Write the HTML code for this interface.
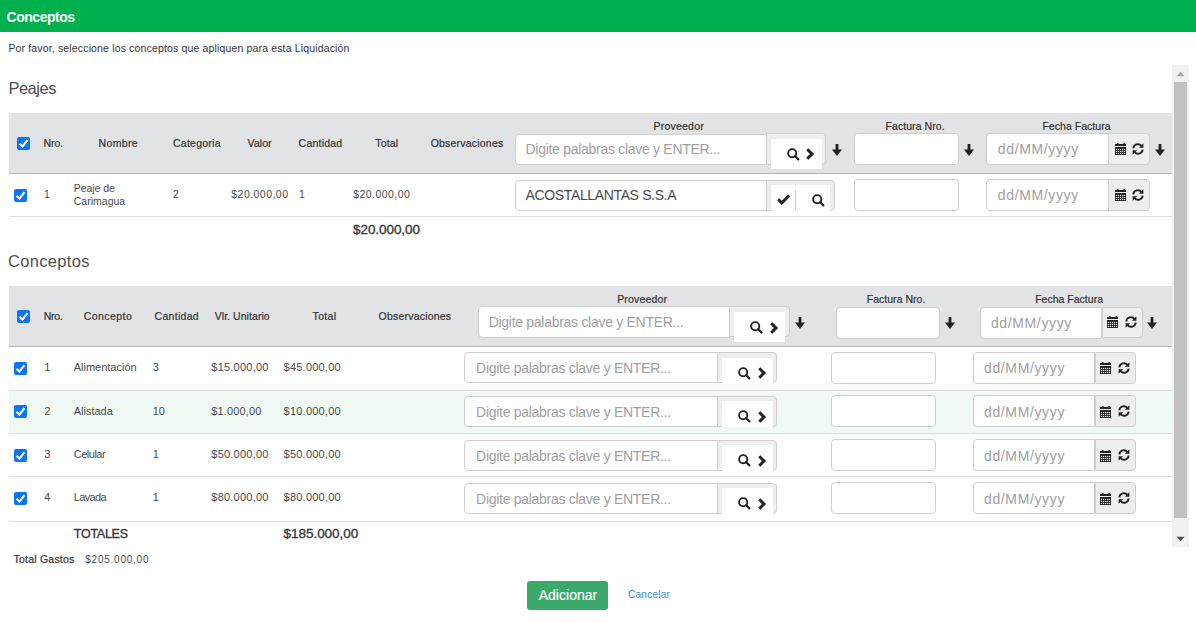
<!DOCTYPE html>
<html><head><meta charset="utf-8"><style>
html,body{margin:0;padding:0;width:1196px;height:623px;overflow:hidden;background:#fff;position:relative;font-family:"Liberation Sans", sans-serif;}
span{line-height:1;white-space:nowrap;}
</style></head><body>
<div style="position:absolute;left:0px;top:0px;width:1196px;height:32px;background:#00b04f"></div>
<div style="position:absolute;left:1172px;top:65px;width:17px;height:482px;background:#f1f1f1"></div>
<div style="position:absolute;left:1174px;top:82px;width:13px;height:436px;background:#c1c1c1"></div>
<svg style="position:absolute;left:1176px;top:71px" width="9" height="6" viewBox="0 0 9 6"><path d="M0.5 5.2 L4.5 0.8 L8.5 5.2 Z" fill="#a3a3a3"/></svg>
<svg style="position:absolute;left:1176px;top:536px" width="9" height="6" viewBox="0 0 9 6"><path d="M0.5 0.8 L4.5 5.2 L8.5 0.8 Z" fill="#505050"/></svg>
<div style="position:absolute;left:9px;top:113px;width:1163px;height:60px;background:#e2e3e5"></div>
<div style="position:absolute;left:9px;top:173px;width:1163px;height:1px;background:#b4b4b4"></div>
<div style="position:absolute;left:9px;top:216px;width:1163px;height:1px;background:#dedede"></div>
<div style="position:absolute;left:17px;top:137px;width:13px;height:13px;border-radius:2px;background:#0b74fc"><svg width="13" height="13" viewBox="0 0 13 13" style="position:absolute;left:0;top:0"><path d="M2.5 6.8 L5.4 9.6 L10.5 3.1" fill="none" stroke="#fff" stroke-width="2.1"/></svg></div>
<div style="position:absolute;left:514.5px;top:133.5px;width:252.5px;height:31.5px;box-sizing:border-box;background:#fff;border:1px solid #cfcfcf;border-radius:4px 0 0 4px;"></div>
<div style="position:absolute;left:766px;top:133.3px;width:60.200000000000045px;height:31.299999999999983px;box-sizing:border-box;background:#eeeeee;border:1px solid #cfcfcf;border-radius:0 4px 4px 0"></div>
<div style="position:absolute;left:771px;top:139px;width:51px;height:30px;background:#fff"></div>
<svg style="position:absolute;left:787px;top:148px" width="13" height="13" viewBox="0 0 13 13"><circle cx="5.2" cy="5.2" r="4.1" fill="none" stroke="#222" stroke-width="1.9"/><line x1="8.2" y1="8.2" x2="11.4" y2="11.4" stroke="#222" stroke-width="2.2" stroke-linecap="round"/></svg>
<svg style="position:absolute;left:806px;top:148px" width="9" height="12" viewBox="0 0 9 12"><path d="M0.2 2.3 L2.3 0.2 L8.1 6 L2.3 11.8 L0.2 9.7 L3.9 6 Z" fill="#222"/></svg>
<svg style="position:absolute;left:832px;top:144px" width="10" height="12" viewBox="0 0 10 12"><rect x="3.6" y="0" width="2.8" height="7" fill="#222"/><path d="M0 5.5 L10 5.5 L5 12 Z" fill="#222"/></svg>
<div style="position:absolute;left:854.2px;top:133.3px;width:105.19999999999993px;height:32.099999999999994px;box-sizing:border-box;background:#fff;border:1px solid #cfcfcf;border-radius:4px;"></div>
<svg style="position:absolute;left:964px;top:144px" width="10" height="12" viewBox="0 0 10 12"><rect x="3.6" y="0" width="2.8" height="7" fill="#222"/><path d="M0 5.5 L10 5.5 L5 12 Z" fill="#222"/></svg>
<div style="position:absolute;left:986.4px;top:133.3px;width:122.60000000000002px;height:32.099999999999994px;box-sizing:border-box;background:#fff;border:1px solid #cfcfcf;border-radius:4px 0 0 4px;"></div>
<div style="position:absolute;left:1108.2px;top:133.3px;width:41.399999999999864px;height:31.299999999999983px;box-sizing:border-box;background:#eeeeee;border:1px solid #cfcfcf;border-radius:0 4px 4px 0"></div>
<svg style="position:absolute;left:1115px;top:142px" width="12" height="14" viewBox="0 0 12 14"><rect x="2" y="1" width="1.6" height="1.5" fill="#222"/><rect x="8.4" y="1" width="1.6" height="1.5" fill="#222"/><rect x="0" y="2" width="11" height="2" fill="#222"/><rect x="0" y="5" width="11" height="8" fill="#222"/><rect x="0.9" y="6.9" width="1.2" height="1.2" fill="#e8e8e8"/><rect x="2.9" y="6.9" width="1.2" height="1.2" fill="#e8e8e8"/><rect x="4.9" y="6.9" width="1.2" height="1.2" fill="#e8e8e8"/><rect x="6.9" y="6.9" width="1.2" height="1.2" fill="#e8e8e8"/><rect x="8.9" y="6.9" width="1.2" height="1.2" fill="#e8e8e8"/><rect x="0.9" y="8.9" width="1.2" height="1.2" fill="#e8e8e8"/><rect x="2.9" y="8.9" width="1.2" height="1.2" fill="#e8e8e8"/><rect x="4.9" y="8.9" width="1.2" height="1.2" fill="#e8e8e8"/><rect x="6.9" y="8.9" width="1.2" height="1.2" fill="#e8e8e8"/><rect x="8.9" y="8.9" width="1.2" height="1.2" fill="#e8e8e8"/><rect x="0.9" y="10.9" width="1.2" height="1.2" fill="#e8e8e8"/><rect x="2.9" y="10.9" width="1.2" height="1.2" fill="#e8e8e8"/><rect x="4.9" y="10.9" width="1.2" height="1.2" fill="#e8e8e8"/><rect x="6.9" y="10.9" width="1.2" height="1.2" fill="#e8e8e8"/><rect x="8.9" y="10.9" width="1.2" height="1.2" fill="#e8e8e8"/></svg>
<svg style="position:absolute;left:1132px;top:143px" width="12" height="12" viewBox="0 0 12 12"><path d="M1.3 5.3 A4.6 4.6 0 0 1 9.4 2.9" fill="none" stroke="#222" stroke-width="1.9"/><path d="M11.4 0.2 L11.4 4.7 L6.9 4.7 Z" fill="#222"/><path d="M10.7 6.7 A4.6 4.6 0 0 1 2.6 9.1" fill="none" stroke="#222" stroke-width="1.9"/><path d="M0.6 11.8 L0.6 7.3 L5.1 7.3 Z" fill="#222"/></svg>
<svg style="position:absolute;left:1155px;top:144px" width="10" height="12" viewBox="0 0 10 12"><rect x="3.6" y="0" width="2.8" height="7" fill="#222"/><path d="M0 5.5 L10 5.5 L5 12 Z" fill="#222"/></svg>
<div style="position:absolute;left:14px;top:189px;width:13px;height:13px;border-radius:2px;background:#0b74fc"><svg width="13" height="13" viewBox="0 0 13 13" style="position:absolute;left:0;top:0"><path d="M2.5 6.8 L5.4 9.6 L10.5 3.1" fill="none" stroke="#fff" stroke-width="2.1"/></svg></div>
<div style="position:absolute;left:514.5px;top:179.5px;width:252.5px;height:31.0px;box-sizing:border-box;background:#fff;border:1px solid #cfcfcf;border-radius:4px 0 0 4px;"></div>
<div style="position:absolute;left:766px;top:179.5px;width:68.5px;height:31.0px;box-sizing:border-box;background:#eeeeee;border:1px solid #cfcfcf;border-radius:0 4px 4px 0"></div>
<div style="position:absolute;left:771px;top:185px;width:59px;height:26px;background:#fff"></div>
<svg style="position:absolute;left:777px;top:194px" width="14" height="12" viewBox="0 0 14 12"><path d="M0.2 6.3 L2.3 4.2 L4.8 6.7 L11.1 0.4 L13.2 2.5 L4.8 10.9 Z" fill="#222"/></svg>
<div style="position:absolute;left:795px;top:190px;width:1px;height:20px;background:#cfcfcf"></div>
<svg style="position:absolute;left:812px;top:194px" width="13" height="13" viewBox="0 0 13 13"><circle cx="5.2" cy="5.2" r="4.1" fill="none" stroke="#222" stroke-width="1.9"/><line x1="8.2" y1="8.2" x2="11.4" y2="11.4" stroke="#222" stroke-width="2.2" stroke-linecap="round"/></svg>
<div style="position:absolute;left:854.2px;top:179px;width:105.19999999999993px;height:31.5px;box-sizing:border-box;background:#fff;border:1px solid #cfcfcf;border-radius:4px;"></div>
<div style="position:absolute;left:986.4px;top:179px;width:122.60000000000002px;height:31.5px;box-sizing:border-box;background:#fff;border:1px solid #cfcfcf;border-radius:4px 0 0 4px;"></div>
<div style="position:absolute;left:1108.2px;top:179px;width:41.399999999999864px;height:31.5px;box-sizing:border-box;background:#eeeeee;border:1px solid #cfcfcf;border-radius:0 4px 4px 0"></div>
<svg style="position:absolute;left:1115px;top:188px" width="12" height="14" viewBox="0 0 12 14"><rect x="2" y="1" width="1.6" height="1.5" fill="#222"/><rect x="8.4" y="1" width="1.6" height="1.5" fill="#222"/><rect x="0" y="2" width="11" height="2" fill="#222"/><rect x="0" y="5" width="11" height="8" fill="#222"/><rect x="0.9" y="6.9" width="1.2" height="1.2" fill="#e8e8e8"/><rect x="2.9" y="6.9" width="1.2" height="1.2" fill="#e8e8e8"/><rect x="4.9" y="6.9" width="1.2" height="1.2" fill="#e8e8e8"/><rect x="6.9" y="6.9" width="1.2" height="1.2" fill="#e8e8e8"/><rect x="8.9" y="6.9" width="1.2" height="1.2" fill="#e8e8e8"/><rect x="0.9" y="8.9" width="1.2" height="1.2" fill="#e8e8e8"/><rect x="2.9" y="8.9" width="1.2" height="1.2" fill="#e8e8e8"/><rect x="4.9" y="8.9" width="1.2" height="1.2" fill="#e8e8e8"/><rect x="6.9" y="8.9" width="1.2" height="1.2" fill="#e8e8e8"/><rect x="8.9" y="8.9" width="1.2" height="1.2" fill="#e8e8e8"/><rect x="0.9" y="10.9" width="1.2" height="1.2" fill="#e8e8e8"/><rect x="2.9" y="10.9" width="1.2" height="1.2" fill="#e8e8e8"/><rect x="4.9" y="10.9" width="1.2" height="1.2" fill="#e8e8e8"/><rect x="6.9" y="10.9" width="1.2" height="1.2" fill="#e8e8e8"/><rect x="8.9" y="10.9" width="1.2" height="1.2" fill="#e8e8e8"/></svg>
<svg style="position:absolute;left:1132px;top:189px" width="12" height="12" viewBox="0 0 12 12"><path d="M1.3 5.3 A4.6 4.6 0 0 1 9.4 2.9" fill="none" stroke="#222" stroke-width="1.9"/><path d="M11.4 0.2 L11.4 4.7 L6.9 4.7 Z" fill="#222"/><path d="M10.7 6.7 A4.6 4.6 0 0 1 2.6 9.1" fill="none" stroke="#222" stroke-width="1.9"/><path d="M0.6 11.8 L0.6 7.3 L5.1 7.3 Z" fill="#222"/></svg>
<div style="position:absolute;left:9px;top:286px;width:1163px;height:60px;background:#e2e3e5"></div>
<div style="position:absolute;left:9px;top:346px;width:1163px;height:1px;background:#b4b4b4"></div>
<div style="position:absolute;left:17px;top:310px;width:13px;height:13px;border-radius:2px;background:#0b74fc"><svg width="13" height="13" viewBox="0 0 13 13" style="position:absolute;left:0;top:0"><path d="M2.5 6.8 L5.4 9.6 L10.5 3.1" fill="none" stroke="#fff" stroke-width="2.1"/></svg></div>
<div style="position:absolute;left:477.7px;top:306.3px;width:252.3px;height:31.899999999999977px;box-sizing:border-box;background:#fff;border:1px solid #cfcfcf;border-radius:4px 0 0 4px;"></div>
<div style="position:absolute;left:729.3px;top:306.3px;width:61.0px;height:31.19999999999999px;box-sizing:border-box;background:#eeeeee;border:1px solid #cfcfcf;border-radius:0 4px 4px 0"></div>
<div style="position:absolute;left:734px;top:312px;width:51px;height:29.5px;background:#fff"></div>
<svg style="position:absolute;left:750px;top:321px" width="13" height="13" viewBox="0 0 13 13"><circle cx="5.2" cy="5.2" r="4.1" fill="none" stroke="#222" stroke-width="1.9"/><line x1="8.2" y1="8.2" x2="11.4" y2="11.4" stroke="#222" stroke-width="2.2" stroke-linecap="round"/></svg>
<svg style="position:absolute;left:770px;top:322px" width="9" height="12" viewBox="0 0 9 12"><path d="M0.2 2.3 L2.3 0.2 L8.1 6 L2.3 11.8 L0.2 9.7 L3.9 6 Z" fill="#222"/></svg>
<svg style="position:absolute;left:795px;top:317px" width="10" height="12" viewBox="0 0 10 12"><rect x="3.6" y="0" width="2.8" height="7" fill="#222"/><path d="M0 5.5 L10 5.5 L5 12 Z" fill="#222"/></svg>
<div style="position:absolute;left:835.7px;top:306.5px;width:104.69999999999993px;height:32.19999999999999px;box-sizing:border-box;background:#fff;border:1px solid #cfcfcf;border-radius:4px;"></div>
<svg style="position:absolute;left:945px;top:317px" width="10" height="12" viewBox="0 0 10 12"><rect x="3.6" y="0" width="2.8" height="7" fill="#222"/><path d="M0 5.5 L10 5.5 L5 12 Z" fill="#222"/></svg>
<div style="position:absolute;left:979.5px;top:306.5px;width:122.5px;height:32.19999999999999px;box-sizing:border-box;background:#fff;border:1px solid #cfcfcf;border-radius:4px 0 0 4px;"></div>
<div style="position:absolute;left:1101.5px;top:306.5px;width:41.200000000000045px;height:31.5px;box-sizing:border-box;background:#eeeeee;border:1px solid #cfcfcf;border-radius:0 4px 4px 0"></div>
<svg style="position:absolute;left:1107px;top:315px" width="12" height="14" viewBox="0 0 12 14"><rect x="2" y="1" width="1.6" height="1.5" fill="#222"/><rect x="8.4" y="1" width="1.6" height="1.5" fill="#222"/><rect x="0" y="2" width="11" height="2" fill="#222"/><rect x="0" y="5" width="11" height="8" fill="#222"/><rect x="0.9" y="6.9" width="1.2" height="1.2" fill="#e8e8e8"/><rect x="2.9" y="6.9" width="1.2" height="1.2" fill="#e8e8e8"/><rect x="4.9" y="6.9" width="1.2" height="1.2" fill="#e8e8e8"/><rect x="6.9" y="6.9" width="1.2" height="1.2" fill="#e8e8e8"/><rect x="8.9" y="6.9" width="1.2" height="1.2" fill="#e8e8e8"/><rect x="0.9" y="8.9" width="1.2" height="1.2" fill="#e8e8e8"/><rect x="2.9" y="8.9" width="1.2" height="1.2" fill="#e8e8e8"/><rect x="4.9" y="8.9" width="1.2" height="1.2" fill="#e8e8e8"/><rect x="6.9" y="8.9" width="1.2" height="1.2" fill="#e8e8e8"/><rect x="8.9" y="8.9" width="1.2" height="1.2" fill="#e8e8e8"/><rect x="0.9" y="10.9" width="1.2" height="1.2" fill="#e8e8e8"/><rect x="2.9" y="10.9" width="1.2" height="1.2" fill="#e8e8e8"/><rect x="4.9" y="10.9" width="1.2" height="1.2" fill="#e8e8e8"/><rect x="6.9" y="10.9" width="1.2" height="1.2" fill="#e8e8e8"/><rect x="8.9" y="10.9" width="1.2" height="1.2" fill="#e8e8e8"/></svg>
<svg style="position:absolute;left:1125px;top:316px" width="12" height="12" viewBox="0 0 12 12"><path d="M1.3 5.3 A4.6 4.6 0 0 1 9.4 2.9" fill="none" stroke="#222" stroke-width="1.9"/><path d="M11.4 0.2 L11.4 4.7 L6.9 4.7 Z" fill="#222"/><path d="M10.7 6.7 A4.6 4.6 0 0 1 2.6 9.1" fill="none" stroke="#222" stroke-width="1.9"/><path d="M0.6 11.8 L0.6 7.3 L5.1 7.3 Z" fill="#222"/></svg>
<svg style="position:absolute;left:1147px;top:317px" width="10" height="12" viewBox="0 0 10 12"><rect x="3.6" y="0" width="2.8" height="7" fill="#222"/><path d="M0 5.5 L10 5.5 L5 12 Z" fill="#222"/></svg>
<div style="position:absolute;left:9px;top:389.5px;width:1163px;height:1.0px;background:#dedede"></div>
<div style="position:absolute;left:14px;top:362px;width:13px;height:13px;border-radius:2px;background:#0b74fc"><svg width="13" height="13" viewBox="0 0 13 13" style="position:absolute;left:0;top:0"><path d="M2.5 6.8 L5.4 9.6 L10.5 3.1" fill="none" stroke="#fff" stroke-width="2.1"/></svg></div>
<div style="position:absolute;left:464.2px;top:352.29999999999995px;width:253.8px;height:31.200000000000045px;box-sizing:border-box;background:#fff;border:1px solid #cfcfcf;border-radius:4px 0 0 4px;"></div>
<div style="position:absolute;left:716.8px;top:352.29999999999995px;width:60.700000000000045px;height:31.200000000000045px;box-sizing:border-box;background:#eeeeee;border:1px solid #cfcfcf;border-radius:0 4px 4px 0"></div>
<div style="position:absolute;left:721.8px;top:357.59999999999997px;width:51.40000000000009px;height:25.900000000000034px;background:#fff"></div>
<svg style="position:absolute;left:738px;top:366.79999999999995px" width="13" height="13" viewBox="0 0 13 13"><circle cx="5.2" cy="5.2" r="4.1" fill="none" stroke="#222" stroke-width="1.9"/><line x1="8.2" y1="8.2" x2="11.4" y2="11.4" stroke="#222" stroke-width="2.2" stroke-linecap="round"/></svg>
<svg style="position:absolute;left:758px;top:367px" width="9" height="12" viewBox="0 0 9 12"><path d="M0.2 2.3 L2.3 0.2 L8.1 6 L2.3 11.8 L0.2 9.7 L3.9 6 Z" fill="#222"/></svg>
<div style="position:absolute;left:830.5px;top:351.99999999999994px;width:105.39999999999998px;height:31.800000000000068px;box-sizing:border-box;background:#fff;border:1px solid #cfcfcf;border-radius:4px;"></div>
<div style="position:absolute;left:972.6px;top:351.99999999999994px;width:122.39999999999998px;height:31.800000000000068px;box-sizing:border-box;background:#fff;border:1px solid #cfcfcf;border-radius:4px 0 0 4px;"></div>
<div style="position:absolute;left:1094.5px;top:351.99999999999994px;width:41.0px;height:31.500000000000057px;box-sizing:border-box;background:#eeeeee;border:1px solid #cfcfcf;border-radius:0 4px 4px 0"></div>
<svg style="position:absolute;left:1100px;top:361px" width="12" height="14" viewBox="0 0 12 14"><rect x="2" y="1" width="1.6" height="1.5" fill="#222"/><rect x="8.4" y="1" width="1.6" height="1.5" fill="#222"/><rect x="0" y="2" width="11" height="2" fill="#222"/><rect x="0" y="5" width="11" height="8" fill="#222"/><rect x="0.9" y="6.9" width="1.2" height="1.2" fill="#e8e8e8"/><rect x="2.9" y="6.9" width="1.2" height="1.2" fill="#e8e8e8"/><rect x="4.9" y="6.9" width="1.2" height="1.2" fill="#e8e8e8"/><rect x="6.9" y="6.9" width="1.2" height="1.2" fill="#e8e8e8"/><rect x="8.9" y="6.9" width="1.2" height="1.2" fill="#e8e8e8"/><rect x="0.9" y="8.9" width="1.2" height="1.2" fill="#e8e8e8"/><rect x="2.9" y="8.9" width="1.2" height="1.2" fill="#e8e8e8"/><rect x="4.9" y="8.9" width="1.2" height="1.2" fill="#e8e8e8"/><rect x="6.9" y="8.9" width="1.2" height="1.2" fill="#e8e8e8"/><rect x="8.9" y="8.9" width="1.2" height="1.2" fill="#e8e8e8"/><rect x="0.9" y="10.9" width="1.2" height="1.2" fill="#e8e8e8"/><rect x="2.9" y="10.9" width="1.2" height="1.2" fill="#e8e8e8"/><rect x="4.9" y="10.9" width="1.2" height="1.2" fill="#e8e8e8"/><rect x="6.9" y="10.9" width="1.2" height="1.2" fill="#e8e8e8"/><rect x="8.9" y="10.9" width="1.2" height="1.2" fill="#e8e8e8"/></svg>
<svg style="position:absolute;left:1118px;top:362px" width="12" height="12" viewBox="0 0 12 12"><path d="M1.3 5.3 A4.6 4.6 0 0 1 9.4 2.9" fill="none" stroke="#222" stroke-width="1.9"/><path d="M11.4 0.2 L11.4 4.7 L6.9 4.7 Z" fill="#222"/><path d="M10.7 6.7 A4.6 4.6 0 0 1 2.6 9.1" fill="none" stroke="#222" stroke-width="1.9"/><path d="M0.6 11.8 L0.6 7.3 L5.1 7.3 Z" fill="#222"/></svg>
<div style="position:absolute;left:9px;top:390.5px;width:1163px;height:42.69999999999999px;background:#f1f9f4"></div>
<div style="position:absolute;left:9px;top:433.2px;width:1163px;height:1.0px;background:#dedede"></div>
<div style="position:absolute;left:14px;top:405px;width:13px;height:13px;border-radius:2px;background:#0b74fc"><svg width="13" height="13" viewBox="0 0 13 13" style="position:absolute;left:0;top:0"><path d="M2.5 6.8 L5.4 9.6 L10.5 3.1" fill="none" stroke="#fff" stroke-width="2.1"/></svg></div>
<div style="position:absolute;left:464.2px;top:395.7px;width:253.8px;height:31.200000000000045px;box-sizing:border-box;background:#fff;border:1px solid #cfcfcf;border-radius:4px 0 0 4px;"></div>
<div style="position:absolute;left:716.8px;top:395.7px;width:60.700000000000045px;height:31.200000000000045px;box-sizing:border-box;background:#eeeeee;border:1px solid #cfcfcf;border-radius:0 4px 4px 0"></div>
<div style="position:absolute;left:721.8px;top:401.0px;width:51.40000000000009px;height:25.900000000000034px;background:#fff"></div>
<svg style="position:absolute;left:738px;top:410.2px" width="13" height="13" viewBox="0 0 13 13"><circle cx="5.2" cy="5.2" r="4.1" fill="none" stroke="#222" stroke-width="1.9"/><line x1="8.2" y1="8.2" x2="11.4" y2="11.4" stroke="#222" stroke-width="2.2" stroke-linecap="round"/></svg>
<svg style="position:absolute;left:758px;top:411px" width="9" height="12" viewBox="0 0 9 12"><path d="M0.2 2.3 L2.3 0.2 L8.1 6 L2.3 11.8 L0.2 9.7 L3.9 6 Z" fill="#222"/></svg>
<div style="position:absolute;left:830.5px;top:395.4px;width:105.39999999999998px;height:31.800000000000068px;box-sizing:border-box;background:#fff;border:1px solid #cfcfcf;border-radius:4px;"></div>
<div style="position:absolute;left:972.6px;top:395.4px;width:122.39999999999998px;height:31.800000000000068px;box-sizing:border-box;background:#fff;border:1px solid #cfcfcf;border-radius:4px 0 0 4px;"></div>
<div style="position:absolute;left:1094.5px;top:395.4px;width:41.0px;height:31.500000000000057px;box-sizing:border-box;background:#eeeeee;border:1px solid #cfcfcf;border-radius:0 4px 4px 0"></div>
<svg style="position:absolute;left:1100px;top:405px" width="12" height="14" viewBox="0 0 12 14"><rect x="2" y="1" width="1.6" height="1.5" fill="#222"/><rect x="8.4" y="1" width="1.6" height="1.5" fill="#222"/><rect x="0" y="2" width="11" height="2" fill="#222"/><rect x="0" y="5" width="11" height="8" fill="#222"/><rect x="0.9" y="6.9" width="1.2" height="1.2" fill="#e8e8e8"/><rect x="2.9" y="6.9" width="1.2" height="1.2" fill="#e8e8e8"/><rect x="4.9" y="6.9" width="1.2" height="1.2" fill="#e8e8e8"/><rect x="6.9" y="6.9" width="1.2" height="1.2" fill="#e8e8e8"/><rect x="8.9" y="6.9" width="1.2" height="1.2" fill="#e8e8e8"/><rect x="0.9" y="8.9" width="1.2" height="1.2" fill="#e8e8e8"/><rect x="2.9" y="8.9" width="1.2" height="1.2" fill="#e8e8e8"/><rect x="4.9" y="8.9" width="1.2" height="1.2" fill="#e8e8e8"/><rect x="6.9" y="8.9" width="1.2" height="1.2" fill="#e8e8e8"/><rect x="8.9" y="8.9" width="1.2" height="1.2" fill="#e8e8e8"/><rect x="0.9" y="10.9" width="1.2" height="1.2" fill="#e8e8e8"/><rect x="2.9" y="10.9" width="1.2" height="1.2" fill="#e8e8e8"/><rect x="4.9" y="10.9" width="1.2" height="1.2" fill="#e8e8e8"/><rect x="6.9" y="10.9" width="1.2" height="1.2" fill="#e8e8e8"/><rect x="8.9" y="10.9" width="1.2" height="1.2" fill="#e8e8e8"/></svg>
<svg style="position:absolute;left:1118px;top:405px" width="12" height="12" viewBox="0 0 12 12"><path d="M1.3 5.3 A4.6 4.6 0 0 1 9.4 2.9" fill="none" stroke="#222" stroke-width="1.9"/><path d="M11.4 0.2 L11.4 4.7 L6.9 4.7 Z" fill="#222"/><path d="M10.7 6.7 A4.6 4.6 0 0 1 2.6 9.1" fill="none" stroke="#222" stroke-width="1.9"/><path d="M0.6 11.8 L0.6 7.3 L5.1 7.3 Z" fill="#222"/></svg>
<div style="position:absolute;left:9px;top:476.2px;width:1163px;height:1.0px;background:#dedede"></div>
<div style="position:absolute;left:14px;top:449px;width:13px;height:13px;border-radius:2px;background:#0b74fc"><svg width="13" height="13" viewBox="0 0 13 13" style="position:absolute;left:0;top:0"><path d="M2.5 6.8 L5.4 9.6 L10.5 3.1" fill="none" stroke="#fff" stroke-width="2.1"/></svg></div>
<div style="position:absolute;left:464.2px;top:439.7px;width:253.8px;height:31.200000000000045px;box-sizing:border-box;background:#fff;border:1px solid #cfcfcf;border-radius:4px 0 0 4px;"></div>
<div style="position:absolute;left:716.8px;top:439.7px;width:60.700000000000045px;height:31.200000000000045px;box-sizing:border-box;background:#eeeeee;border:1px solid #cfcfcf;border-radius:0 4px 4px 0"></div>
<div style="position:absolute;left:721.8px;top:445.0px;width:51.40000000000009px;height:25.900000000000034px;background:#fff"></div>
<svg style="position:absolute;left:738px;top:454.2px" width="13" height="13" viewBox="0 0 13 13"><circle cx="5.2" cy="5.2" r="4.1" fill="none" stroke="#222" stroke-width="1.9"/><line x1="8.2" y1="8.2" x2="11.4" y2="11.4" stroke="#222" stroke-width="2.2" stroke-linecap="round"/></svg>
<svg style="position:absolute;left:758px;top:455px" width="9" height="12" viewBox="0 0 9 12"><path d="M0.2 2.3 L2.3 0.2 L8.1 6 L2.3 11.8 L0.2 9.7 L3.9 6 Z" fill="#222"/></svg>
<div style="position:absolute;left:830.5px;top:439.4px;width:105.39999999999998px;height:31.800000000000068px;box-sizing:border-box;background:#fff;border:1px solid #cfcfcf;border-radius:4px;"></div>
<div style="position:absolute;left:972.6px;top:439.4px;width:122.39999999999998px;height:31.800000000000068px;box-sizing:border-box;background:#fff;border:1px solid #cfcfcf;border-radius:4px 0 0 4px;"></div>
<div style="position:absolute;left:1094.5px;top:439.4px;width:41.0px;height:31.500000000000057px;box-sizing:border-box;background:#eeeeee;border:1px solid #cfcfcf;border-radius:0 4px 4px 0"></div>
<svg style="position:absolute;left:1100px;top:449px" width="12" height="14" viewBox="0 0 12 14"><rect x="2" y="1" width="1.6" height="1.5" fill="#222"/><rect x="8.4" y="1" width="1.6" height="1.5" fill="#222"/><rect x="0" y="2" width="11" height="2" fill="#222"/><rect x="0" y="5" width="11" height="8" fill="#222"/><rect x="0.9" y="6.9" width="1.2" height="1.2" fill="#e8e8e8"/><rect x="2.9" y="6.9" width="1.2" height="1.2" fill="#e8e8e8"/><rect x="4.9" y="6.9" width="1.2" height="1.2" fill="#e8e8e8"/><rect x="6.9" y="6.9" width="1.2" height="1.2" fill="#e8e8e8"/><rect x="8.9" y="6.9" width="1.2" height="1.2" fill="#e8e8e8"/><rect x="0.9" y="8.9" width="1.2" height="1.2" fill="#e8e8e8"/><rect x="2.9" y="8.9" width="1.2" height="1.2" fill="#e8e8e8"/><rect x="4.9" y="8.9" width="1.2" height="1.2" fill="#e8e8e8"/><rect x="6.9" y="8.9" width="1.2" height="1.2" fill="#e8e8e8"/><rect x="8.9" y="8.9" width="1.2" height="1.2" fill="#e8e8e8"/><rect x="0.9" y="10.9" width="1.2" height="1.2" fill="#e8e8e8"/><rect x="2.9" y="10.9" width="1.2" height="1.2" fill="#e8e8e8"/><rect x="4.9" y="10.9" width="1.2" height="1.2" fill="#e8e8e8"/><rect x="6.9" y="10.9" width="1.2" height="1.2" fill="#e8e8e8"/><rect x="8.9" y="10.9" width="1.2" height="1.2" fill="#e8e8e8"/></svg>
<svg style="position:absolute;left:1118px;top:449px" width="12" height="12" viewBox="0 0 12 12"><path d="M1.3 5.3 A4.6 4.6 0 0 1 9.4 2.9" fill="none" stroke="#222" stroke-width="1.9"/><path d="M11.4 0.2 L11.4 4.7 L6.9 4.7 Z" fill="#222"/><path d="M10.7 6.7 A4.6 4.6 0 0 1 2.6 9.1" fill="none" stroke="#222" stroke-width="1.9"/><path d="M0.6 11.8 L0.6 7.3 L5.1 7.3 Z" fill="#222"/></svg>
<div style="position:absolute;left:9px;top:520.5px;width:1163px;height:1.0px;background:#dedede"></div>
<div style="position:absolute;left:14px;top:492px;width:13px;height:13px;border-radius:2px;background:#0b74fc"><svg width="13" height="13" viewBox="0 0 13 13" style="position:absolute;left:0;top:0"><path d="M2.5 6.8 L5.4 9.6 L10.5 3.1" fill="none" stroke="#fff" stroke-width="2.1"/></svg></div>
<div style="position:absolute;left:464.2px;top:482.7px;width:253.8px;height:31.19999999999999px;box-sizing:border-box;background:#fff;border:1px solid #cfcfcf;border-radius:4px 0 0 4px;"></div>
<div style="position:absolute;left:716.8px;top:482.7px;width:60.700000000000045px;height:31.19999999999999px;box-sizing:border-box;background:#eeeeee;border:1px solid #cfcfcf;border-radius:0 4px 4px 0"></div>
<div style="position:absolute;left:721.8px;top:488.0px;width:51.40000000000009px;height:25.899999999999977px;background:#fff"></div>
<svg style="position:absolute;left:738px;top:497.2px" width="13" height="13" viewBox="0 0 13 13"><circle cx="5.2" cy="5.2" r="4.1" fill="none" stroke="#222" stroke-width="1.9"/><line x1="8.2" y1="8.2" x2="11.4" y2="11.4" stroke="#222" stroke-width="2.2" stroke-linecap="round"/></svg>
<svg style="position:absolute;left:758px;top:498px" width="9" height="12" viewBox="0 0 9 12"><path d="M0.2 2.3 L2.3 0.2 L8.1 6 L2.3 11.8 L0.2 9.7 L3.9 6 Z" fill="#222"/></svg>
<div style="position:absolute;left:830.5px;top:482.4px;width:105.39999999999998px;height:31.799999999999955px;box-sizing:border-box;background:#fff;border:1px solid #cfcfcf;border-radius:4px;"></div>
<div style="position:absolute;left:972.6px;top:482.4px;width:122.39999999999998px;height:31.799999999999955px;box-sizing:border-box;background:#fff;border:1px solid #cfcfcf;border-radius:4px 0 0 4px;"></div>
<div style="position:absolute;left:1094.5px;top:482.4px;width:41.0px;height:31.5px;box-sizing:border-box;background:#eeeeee;border:1px solid #cfcfcf;border-radius:0 4px 4px 0"></div>
<svg style="position:absolute;left:1100px;top:492px" width="12" height="14" viewBox="0 0 12 14"><rect x="2" y="1" width="1.6" height="1.5" fill="#222"/><rect x="8.4" y="1" width="1.6" height="1.5" fill="#222"/><rect x="0" y="2" width="11" height="2" fill="#222"/><rect x="0" y="5" width="11" height="8" fill="#222"/><rect x="0.9" y="6.9" width="1.2" height="1.2" fill="#e8e8e8"/><rect x="2.9" y="6.9" width="1.2" height="1.2" fill="#e8e8e8"/><rect x="4.9" y="6.9" width="1.2" height="1.2" fill="#e8e8e8"/><rect x="6.9" y="6.9" width="1.2" height="1.2" fill="#e8e8e8"/><rect x="8.9" y="6.9" width="1.2" height="1.2" fill="#e8e8e8"/><rect x="0.9" y="8.9" width="1.2" height="1.2" fill="#e8e8e8"/><rect x="2.9" y="8.9" width="1.2" height="1.2" fill="#e8e8e8"/><rect x="4.9" y="8.9" width="1.2" height="1.2" fill="#e8e8e8"/><rect x="6.9" y="8.9" width="1.2" height="1.2" fill="#e8e8e8"/><rect x="8.9" y="8.9" width="1.2" height="1.2" fill="#e8e8e8"/><rect x="0.9" y="10.9" width="1.2" height="1.2" fill="#e8e8e8"/><rect x="2.9" y="10.9" width="1.2" height="1.2" fill="#e8e8e8"/><rect x="4.9" y="10.9" width="1.2" height="1.2" fill="#e8e8e8"/><rect x="6.9" y="10.9" width="1.2" height="1.2" fill="#e8e8e8"/><rect x="8.9" y="10.9" width="1.2" height="1.2" fill="#e8e8e8"/></svg>
<svg style="position:absolute;left:1118px;top:492px" width="12" height="12" viewBox="0 0 12 12"><path d="M1.3 5.3 A4.6 4.6 0 0 1 9.4 2.9" fill="none" stroke="#222" stroke-width="1.9"/><path d="M11.4 0.2 L11.4 4.7 L6.9 4.7 Z" fill="#222"/><path d="M10.7 6.7 A4.6 4.6 0 0 1 2.6 9.1" fill="none" stroke="#222" stroke-width="1.9"/><path d="M0.6 11.8 L0.6 7.3 L5.1 7.3 Z" fill="#222"/></svg>
<div style="position:absolute;left:527px;top:581px;width:81px;height:29px;background:#3aa96a;border-radius:3px"></div>
<span id="t0" style="position:absolute;left:6.60px;top:9.55px;font-size:14px;font-weight:700;color:#fff;letter-spacing:-0.480px;">Conceptos</span>
<span id="t1" style="position:absolute;left:8.40px;top:43.01px;font-size:10.5px;font-weight:400;color:#333;letter-spacing:0.154px;">Por favor, seleccione los conceptos que apliquen para esta Liquidación</span>
<span id="t2" style="position:absolute;left:8.40px;top:79.93px;font-size:16.5px;font-weight:400;color:#505050;letter-spacing:-0.491px;">Peajes</span>
<span id="t3" style="position:absolute;left:43.60px;top:137.51px;font-size:10.5px;font-weight:400;color:#333;letter-spacing:-0.081px;-webkit-text-stroke:0.2px #333;">Nro.</span>
<span id="t4" style="position:absolute;left:98.60px;top:137.51px;font-size:10.5px;font-weight:400;color:#333;letter-spacing:0.348px;-webkit-text-stroke:0.2px #333;">Nombre</span>
<span id="t5" style="position:absolute;left:173.00px;top:137.51px;font-size:10.5px;font-weight:400;color:#333;letter-spacing:0.246px;-webkit-text-stroke:0.2px #333;">Categoria</span>
<span id="t6" style="position:absolute;left:247.60px;top:137.51px;font-size:10.5px;font-weight:400;color:#333;letter-spacing:0.066px;-webkit-text-stroke:0.2px #333;">Valor</span>
<span id="t7" style="position:absolute;left:298.60px;top:137.51px;font-size:10.5px;font-weight:400;color:#333;letter-spacing:0.224px;-webkit-text-stroke:0.2px #333;">Cantidad</span>
<span id="t8" style="position:absolute;left:375.30px;top:137.51px;font-size:10.5px;font-weight:400;color:#333;letter-spacing:0.153px;-webkit-text-stroke:0.2px #333;">Total</span>
<span id="t9" style="position:absolute;left:430.70px;top:137.51px;font-size:10.5px;font-weight:400;color:#333;letter-spacing:0.204px;-webkit-text-stroke:0.2px #333;">Observaciones</span>
<span id="t10" style="position:absolute;left:653.60px;top:121.31px;font-size:10.5px;font-weight:400;color:#333;letter-spacing:0.206px;-webkit-text-stroke:0.2px #333;">Proveedor</span>
<span id="t11" style="position:absolute;left:885.50px;top:121.31px;font-size:10.5px;font-weight:400;color:#333;letter-spacing:0.067px;-webkit-text-stroke:0.2px #333;">Factura Nro.</span>
<span id="t12" style="position:absolute;left:1042.40px;top:121.31px;font-size:10.5px;font-weight:400;color:#333;letter-spacing:0.041px;-webkit-text-stroke:0.2px #333;">Fecha Factura</span>
<span id="t13" style="position:absolute;left:525.50px;top:142.35px;font-size:14px;font-weight:400;color:#a0a0a0;letter-spacing:-0.286px;">Digite palabras clave y ENTER...</span>
<span id="t14" style="position:absolute;left:997.80px;top:142.35px;font-size:14px;font-weight:400;color:#a0a0a0;letter-spacing:0.635px;">dd/MM/yyyy</span>
<span id="t15" style="position:absolute;left:44.10px;top:189.11px;font-size:10.5px;font-weight:400;color:#4a4a4a;letter-spacing:0.000px;">1</span>
<span id="t16" style="position:absolute;left:73.70px;top:182.71px;font-size:10.5px;font-weight:400;color:#4a4a4a;letter-spacing:-0.036px;">Peaje de</span>
<span id="t17" style="position:absolute;left:73.70px;top:195.81px;font-size:10.5px;font-weight:400;color:#4a4a4a;letter-spacing:0.018px;">Carimagua</span>
<span id="t18" style="position:absolute;left:173.00px;top:189.11px;font-size:10.5px;font-weight:400;color:#4a4a4a;letter-spacing:0.000px;">2</span>
<span id="t19" style="position:absolute;left:231.30px;top:189.11px;font-size:10.5px;font-weight:400;color:#4a4a4a;letter-spacing:0.460px;">$20.000,00</span>
<span id="t20" style="position:absolute;left:299.00px;top:189.11px;font-size:10.5px;font-weight:400;color:#4a4a4a;letter-spacing:0.000px;">1</span>
<span id="t21" style="position:absolute;left:353.20px;top:189.11px;font-size:10.5px;font-weight:400;color:#4a4a4a;letter-spacing:0.460px;">$20.000,00</span>
<span id="t22" style="position:absolute;left:525.50px;top:187.75px;font-size:14px;font-weight:400;color:#4a4a4a;letter-spacing:-0.357px;">ACOSTALLANTAS S.S.A</span>
<span id="t23" style="position:absolute;left:997.80px;top:188.35px;font-size:14px;font-weight:400;color:#a0a0a0;letter-spacing:0.635px;">dd/MM/yyyy</span>
<span id="t24" style="position:absolute;left:353.00px;top:222.77px;font-size:13.5px;font-weight:400;color:#333;letter-spacing:-0.064px;-webkit-text-stroke:0.3px #333;">$20.000,00</span>
<span id="t25" style="position:absolute;left:8.00px;top:253.03px;font-size:16.5px;font-weight:400;color:#505050;letter-spacing:0.314px;">Conceptos</span>
<span id="t26" style="position:absolute;left:43.70px;top:310.71px;font-size:10.5px;font-weight:400;color:#333;letter-spacing:-0.215px;-webkit-text-stroke:0.2px #333;">Nro.</span>
<span id="t27" style="position:absolute;left:83.70px;top:310.71px;font-size:10.5px;font-weight:400;color:#333;letter-spacing:0.450px;-webkit-text-stroke:0.2px #333;">Concepto</span>
<span id="t28" style="position:absolute;left:154.60px;top:310.71px;font-size:10.5px;font-weight:400;color:#333;letter-spacing:0.281px;-webkit-text-stroke:0.2px #333;">Cantidad</span>
<span id="t29" style="position:absolute;left:214.70px;top:310.71px;font-size:10.5px;font-weight:400;color:#333;letter-spacing:0.060px;-webkit-text-stroke:0.2px #333;">Vlr. Unitario</span>
<span id="t30" style="position:absolute;left:312.60px;top:310.71px;font-size:10.5px;font-weight:400;color:#333;letter-spacing:0.303px;-webkit-text-stroke:0.2px #333;">Total</span>
<span id="t31" style="position:absolute;left:378.60px;top:310.71px;font-size:10.5px;font-weight:400;color:#333;letter-spacing:0.204px;-webkit-text-stroke:0.2px #333;">Observaciones</span>
<span id="t32" style="position:absolute;left:617.20px;top:294.31px;font-size:10.5px;font-weight:400;color:#333;letter-spacing:0.181px;-webkit-text-stroke:0.2px #333;">Proveedor</span>
<span id="t33" style="position:absolute;left:866.70px;top:294.31px;font-size:10.5px;font-weight:400;color:#333;letter-spacing:0.031px;-webkit-text-stroke:0.2px #333;">Factura Nro.</span>
<span id="t34" style="position:absolute;left:1035.20px;top:294.31px;font-size:10.5px;font-weight:400;color:#333;letter-spacing:0.008px;-webkit-text-stroke:0.2px #333;">Fecha Factura</span>
<span id="t35" style="position:absolute;left:488.70px;top:315.45px;font-size:14px;font-weight:400;color:#a0a0a0;letter-spacing:-0.286px;">Digite palabras clave y ENTER...</span>
<span id="t36" style="position:absolute;left:990.90px;top:315.65px;font-size:14px;font-weight:400;color:#a0a0a0;letter-spacing:0.635px;">dd/MM/yyyy</span>
<span id="t37" style="position:absolute;left:44.20px;top:361.59px;font-size:11px;font-weight:400;color:#4a4a4a;letter-spacing:0.000px;">1</span>
<span id="t38" style="position:absolute;left:73.70px;top:361.59px;font-size:11px;font-weight:400;color:#4a4a4a;letter-spacing:0.001px;">Alimentación</span>
<span id="t39" style="position:absolute;left:152.80px;top:361.59px;font-size:11px;font-weight:400;color:#4a4a4a;letter-spacing:0.000px;">3</span>
<span id="t40" style="position:absolute;left:211.30px;top:361.59px;font-size:11px;font-weight:400;color:#4a4a4a;letter-spacing:0.226px;">$15.000,00</span>
<span id="t41" style="position:absolute;left:283.60px;top:361.59px;font-size:11px;font-weight:400;color:#4a4a4a;letter-spacing:0.226px;">$45.000,00</span>
<span id="t42" style="position:absolute;left:476.10px;top:361.25px;font-size:14px;font-weight:400;color:#a0a0a0;letter-spacing:-0.286px;">Digite palabras clave y ENTER...</span>
<span id="t43" style="position:absolute;left:984.00px;top:361.25px;font-size:14px;font-weight:400;color:#a0a0a0;letter-spacing:0.635px;">dd/MM/yyyy</span>
<span id="t44" style="position:absolute;left:44.20px;top:405.69px;font-size:11px;font-weight:400;color:#4a4a4a;letter-spacing:0.000px;">2</span>
<span id="t45" style="position:absolute;left:73.70px;top:405.69px;font-size:11px;font-weight:400;color:#4a4a4a;letter-spacing:-0.006px;">Alistada</span>
<span id="t46" style="position:absolute;left:152.80px;top:405.69px;font-size:11px;font-weight:400;color:#4a4a4a;letter-spacing:-0.250px;">10</span>
<span id="t47" style="position:absolute;left:211.30px;top:405.69px;font-size:11px;font-weight:400;color:#4a4a4a;letter-spacing:0.133px;">$1.000,00</span>
<span id="t48" style="position:absolute;left:283.60px;top:405.69px;font-size:11px;font-weight:400;color:#4a4a4a;letter-spacing:0.226px;">$10.000,00</span>
<span id="t49" style="position:absolute;left:476.10px;top:404.65px;font-size:14px;font-weight:400;color:#a0a0a0;letter-spacing:-0.286px;">Digite palabras clave y ENTER...</span>
<span id="t50" style="position:absolute;left:984.00px;top:404.65px;font-size:14px;font-weight:400;color:#a0a0a0;letter-spacing:0.635px;">dd/MM/yyyy</span>
<span id="t51" style="position:absolute;left:44.20px;top:448.69px;font-size:11px;font-weight:400;color:#4a4a4a;letter-spacing:0.000px;">3</span>
<span id="t52" style="position:absolute;left:73.70px;top:448.69px;font-size:11px;font-weight:400;color:#4a4a4a;letter-spacing:-0.477px;">Celular</span>
<span id="t53" style="position:absolute;left:152.80px;top:448.69px;font-size:11px;font-weight:400;color:#4a4a4a;letter-spacing:0.000px;">1</span>
<span id="t54" style="position:absolute;left:211.30px;top:448.69px;font-size:11px;font-weight:400;color:#4a4a4a;letter-spacing:0.226px;">$50.000,00</span>
<span id="t55" style="position:absolute;left:283.60px;top:448.69px;font-size:11px;font-weight:400;color:#4a4a4a;letter-spacing:0.226px;">$50.000,00</span>
<span id="t56" style="position:absolute;left:476.10px;top:448.65px;font-size:14px;font-weight:400;color:#a0a0a0;letter-spacing:-0.286px;">Digite palabras clave y ENTER...</span>
<span id="t57" style="position:absolute;left:984.00px;top:448.65px;font-size:14px;font-weight:400;color:#a0a0a0;letter-spacing:0.635px;">dd/MM/yyyy</span>
<span id="t58" style="position:absolute;left:44.20px;top:492.39px;font-size:11px;font-weight:400;color:#4a4a4a;letter-spacing:0.000px;">4</span>
<span id="t59" style="position:absolute;left:73.70px;top:492.39px;font-size:11px;font-weight:400;color:#4a4a4a;letter-spacing:-0.619px;">Lavada</span>
<span id="t60" style="position:absolute;left:152.80px;top:492.39px;font-size:11px;font-weight:400;color:#4a4a4a;letter-spacing:0.000px;">1</span>
<span id="t61" style="position:absolute;left:211.30px;top:492.39px;font-size:11px;font-weight:400;color:#4a4a4a;letter-spacing:0.226px;">$80.000,00</span>
<span id="t62" style="position:absolute;left:283.60px;top:492.39px;font-size:11px;font-weight:400;color:#4a4a4a;letter-spacing:0.226px;">$80.000,00</span>
<span id="t63" style="position:absolute;left:476.10px;top:491.65px;font-size:14px;font-weight:400;color:#a0a0a0;letter-spacing:-0.286px;">Digite palabras clave y ENTER...</span>
<span id="t64" style="position:absolute;left:984.00px;top:491.65px;font-size:14px;font-weight:400;color:#a0a0a0;letter-spacing:0.635px;">dd/MM/yyyy</span>
<span id="t65" style="position:absolute;left:73.80px;top:527.92px;font-size:12.5px;font-weight:400;color:#333;letter-spacing:-0.269px;-webkit-text-stroke:0.3px #333;">TOTALES</span>
<span id="t66" style="position:absolute;left:283.60px;top:527.07px;font-size:13.5px;font-weight:400;color:#333;letter-spacing:-0.048px;-webkit-text-stroke:0.3px #333;">$185.000,00</span>
<span id="t67" style="position:absolute;left:13.60px;top:554.21px;font-size:10.5px;font-weight:400;color:#333;letter-spacing:0.211px;-webkit-text-stroke:0.2px #333;">Total Gastos</span>
<span id="t68" style="position:absolute;left:85.30px;top:554.63px;font-size:10px;font-weight:400;color:#4a4a4a;letter-spacing:0.758px;">$205.000,00</span>
<span id="t69" style="position:absolute;left:538.70px;top:587.85px;font-size:14px;font-weight:400;color:#fff;letter-spacing:0.028px;-webkit-text-stroke:0.2px #fff;">Adicionar</span>
<span id="t70" style="position:absolute;left:628.10px;top:589.63px;font-size:10px;font-weight:400;color:#2f8fdc;letter-spacing:0.238px;">Cancelar</span>
</body></html>
